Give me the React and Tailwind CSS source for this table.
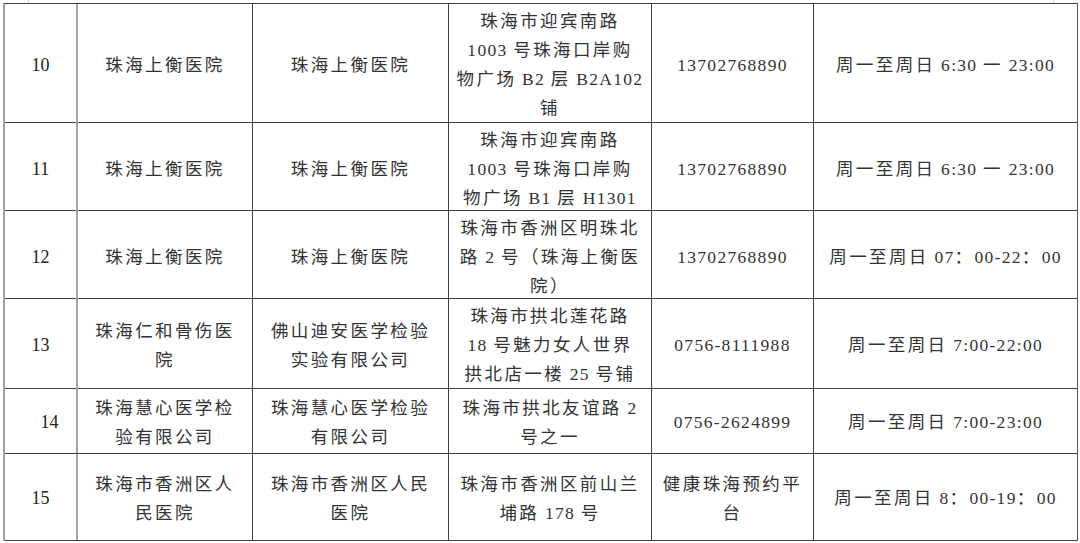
import React from "react";

const rows = [
  {
    h: "h-[119px]",
    n: "10",
    a: ["珠海上衡医院"],
    b: ["珠海上衡医院"],
    c: ["珠海市迎宾南路", "1003 号珠海口岸购", "物广场 B2 层 B2A102", "铺"],
    d: ["13702768890"],
    e: ["周一至周日 6:30 一 23:00"],
  },
  {
    h: "h-[88px]",
    n: "11",
    a: ["珠海上衡医院"],
    b: ["珠海上衡医院"],
    c: ["珠海市迎宾南路", "1003 号珠海口岸购", "物广场 B1 层 H1301"],
    d: ["13702768890"],
    e: ["周一至周日 6:30 一 23:00"],
  },
  {
    h: "h-[88px]",
    n: "12",
    a: ["珠海上衡医院"],
    b: ["珠海上衡医院"],
    c: ["珠海市香洲区明珠北", "路 2 号（珠海上衡医", "院）"],
    d: ["13702768890"],
    e: ["周一至周日 07：00-22：00"],
  },
  {
    h: "h-[90px]",
    n: "13",
    a: ["珠海仁和骨伤医", "院"],
    b: ["佛山迪安医学检验", "实验有限公司"],
    c: ["珠海市拱北莲花路", "18 号魅力女人世界", "拱北店一楼 25 号铺"],
    d: ["0756-8111988"],
    e: ["周一至周日 7:00-22:00"],
  },
  {
    h: "h-[65px]",
    n: "14",
    nShift: true,
    a: ["珠海慧心医学检", "验有限公司"],
    b: ["珠海慧心医学检验", "有限公司"],
    c: ["珠海市拱北友谊路 2", "号之一"],
    d: ["0756-2624899"],
    e: ["周一至周日 7:00-23:00"],
  },
  {
    h: "h-[87px]",
    n: "15",
    a: ["珠海市香洲区人", "民医院"],
    b: ["珠海市香洲区人民", "医院"],
    c: ["珠海市香洲区前山兰", "埔路 178 号"],
    d: ["健康珠海预约平", "台"],
    e: ["周一至周日 8：00-19：00"],
  },
];

function Line({ text }) {
  const parts = text.match(/[\x20-\x7e]+|[^\x20-\x7e]+/g) || [];
  return (
    <div className="whitespace-nowrap leading-[29px]">
      {parts.map((p, i) =>
        /^[\x20-\x7e]+$/.test(p) ? (
          <span key={i} className="tracking-[1.3px]">
            {p}
          </span>
        ) : (
          <span key={i} className="tracking-[2.4px]">
            {p}
          </span>
        )
      )}
    </div>
  );
}

function Cell({ lines, className = "" }) {
  return (
    <div
      className={`flex flex-col items-center justify-center text-center pt-[3px] border-r border-[#3f3f3f] ${className}`}
    >
      {lines.map((l, i) => (
        <Line key={i} text={l} />
      ))}
    </div>
  );
}

export default function App() {
  return (
    <div
      className="relative w-[1080px] h-[543px] bg-white overflow-hidden text-[#333] text-[17.5px]"
      style={{ fontFamily: '"Liberation Serif", "Noto Sans CJK SC", serif' }}
    >
      <div className="absolute left-[28px] top-0 w-px h-[3px] bg-[#d4d4d4]" />
      <div className="absolute left-[1053px] top-0 w-px h-[3px] bg-[#d4d4d4]" />
      <div className="ml-[3px] mt-[3px] w-[1075px] border-t border-t-[#3f3f3f] border-l-2 border-l-[#a3a3a3] border-r border-r-[#555]">
        {rows.map((r) => (
          <div
            key={r.n}
            className={`grid grid-cols-[73px_175px_196px_203px_162px_263px] border-b border-b-[#3f3f3f] ${r.h}`}
          >
            <div className="flex items-center justify-center pt-[3px] border-r-2 border-r-[#a3a3a3] text-[#222] text-[18px]">
              <span className={r.nShift ? "pl-[18px]" : ""}>{r.n}</span>
            </div>
            <Cell lines={r.a} />
            <Cell lines={r.b} />
            <Cell lines={r.c} />
            <Cell lines={r.d} />
            <Cell lines={r.e} className="border-r-0" />
          </div>
        ))}
      </div>
    </div>
  );
}
